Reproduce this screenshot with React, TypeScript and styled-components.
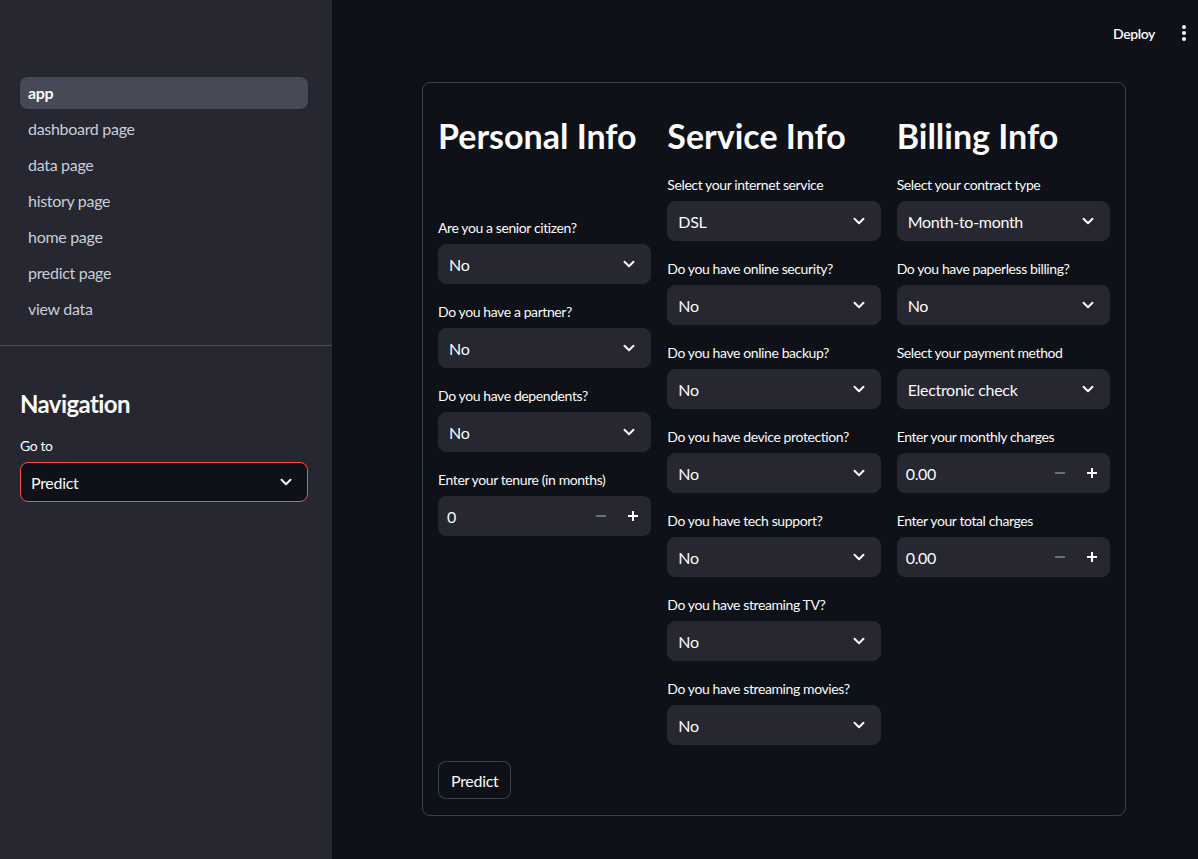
import React from "react";
import styled, { createGlobalStyle } from "styled-components";

const FONT = `"Lato", "Noto Sans", sans-serif`;

const GlobalStyle = createGlobalStyle`
  html, body { margin: 0; padding: 0; background: #0e1117; }
  body { font-family: ${FONT}; color: #fafafa; letter-spacing: -0.3px; }
  * { box-sizing: border-box; }
`;

const Layout = styled.div`
  display: flex;
  width: 1198px;
  height: 859px;
  overflow: hidden;
`;

const Sidebar = styled.aside`
  width: 332px;
  flex-shrink: 0;
  background: #262730;
  display: flex;
  flex-direction: column;
`;

const NavList = styled.nav`
  display: flex;
  flex-direction: column;
  gap: 4px;
  padding: 77px 24px 20px 20px;
`;

const NavItem = styled.div<{ $active?: boolean }>`
  height: 32px;
  display: flex;
  align-items: center;
  padding: 0 8px 2px;
  border-radius: 8px;
  font-size: 16px;
  background: ${(p) => (p.$active ? "#474a56" : "transparent")};
  color: ${(p) => (p.$active ? "#fafafa" : "#c9ced8")};
  font-weight: ${(p) => (p.$active ? 700 : 400)};
`;

const Divider = styled.hr`
  margin: 0;
  border: none;
  border-top: 1px solid #4a4b55;
`;

const SidebarSection = styled.div`
  display: flex;
  flex-direction: column;
  padding: 43px 24px 0 20px;
`;

const SideHeading = styled.h2`
  margin: 0 0 16px;
  font-size: 24px;
  line-height: 29px;
  font-weight: 700;
  letter-spacing: -0.6px;
  color: #fafafa;
`;

const Main = styled.main`
  flex: 1;
  display: flex;
  flex-direction: column;
`;

const TopBar = styled.header`
  height: 66px;
  display: flex;
  justify-content: flex-end;
  align-items: center;
  gap: 21px;
  padding-right: 6px;
`;

const DeployText = styled.span`
  font-size: 14px;
  font-weight: 600;
  letter-spacing: -0.4px;
  color: #fafafa;
`;

const Content = styled.div`
  padding: 16px 0 0 90px;
`;

const Card = styled.section`
  width: 704px;
  border: 1px solid rgba(250, 250, 250, 0.2);
  border-radius: 8px;
  padding: 16px 15px;
  display: flex;
  flex-direction: column;
  gap: 16px;
`;

const Columns = styled.div`
  display: grid;
  grid-template-columns: repeat(3, 1fr);
  gap: 16px;
  align-items: start;
`;

const Column = styled.div`
  display: flex;
  flex-direction: column;
  gap: 16px;
  min-width: 0;
`;

const Heading = styled.h2`
  margin: 0;
  padding-top: 16px;
  font-size: 34px;
  line-height: 42px;
  font-weight: 700;
  letter-spacing: 0;
  color: #fafafa;
  white-space: nowrap;
`;

const Spacer = styled.div<{ $h: number }>`
  height: ${(p) => p.$h}px;
`;

const FieldWrap = styled.div`
  display: flex;
  flex-direction: column;
`;

const Label = styled.label`
  height: 24px;
  line-height: 24px;
  margin-bottom: 4px;
  font-size: 14px;
  letter-spacing: -0.4px;
  color: #fafafa;
  white-space: nowrap;
`;

const SelectBox = styled.div<{ $focused?: boolean }>`
  height: 40px;
  border-radius: 8px;
  display: flex;
  align-items: center;
  justify-content: space-between;
  padding: 0 11px 0 10px;
  font-size: 16px;
  color: #fafafa;
  background: ${(p) => (p.$focused ? "#0e1117" : "#262730")};
  border: 1px solid ${(p) => (p.$focused ? "#ff4b4b" : "#262730")};
`;

const NumberBox = styled.div`
  height: 40px;
  border-radius: 8px;
  background: #262730;
  display: flex;
  align-items: center;
  padding: 0 2px 0 9px;
  font-size: 16px;
  color: #fafafa;
`;

const NumberValue = styled.span`
  flex: 1;
`;

const StepButton = styled.div`
  width: 32px;
  height: 38px;
  display: flex;
  align-items: center;
  justify-content: center;
`;

const Button = styled.button`
  align-self: flex-start;
  height: 38px;
  padding: 0 12px;
  border-radius: 8px;
  border: 1px solid rgba(250, 250, 250, 0.2);
  background: #0e1117;
  color: #fafafa;
  font-family: ${FONT};
  font-size: 16px;
  letter-spacing: -0.3px;
`;

const Chevron = () => (
  <svg width="20" height="20" viewBox="0 0 20 20" fill="none">
    <path d="M5.5 7.75l4.5 4.5 4.5-4.5" stroke="#fafafa" strokeWidth="2" strokeLinecap="round" strokeLinejoin="round" />
  </svg>
);

const Minus = ({ color }: { color: string }) => (
  <svg width="12" height="12" viewBox="0 0 12 12">
    <rect x="1" y="5" width="10" height="2" fill={color} />
  </svg>
);

const Plus = () => (
  <svg width="12" height="12" viewBox="0 0 12 12">
    <rect x="1" y="5" width="10" height="2" fill="#fafafa" />
    <rect x="5" y="1" width="2" height="10" fill="#fafafa" />
  </svg>
);

const Kebab = () => (
  <svg width="16" height="20" viewBox="0 0 16 20">
    <circle cx="8" cy="4" r="2" fill="#fafafa" />
    <circle cx="8" cy="10" r="2" fill="#fafafa" />
    <circle cx="8" cy="16" r="2" fill="#fafafa" />
  </svg>
);

const Select = ({ label, value, focused }: { label: string; value: string; focused?: boolean }) => (
  <FieldWrap>
    <Label>{label}</Label>
    <SelectBox $focused={focused}>
      <span>{value}</span>
      <Chevron />
    </SelectBox>
  </FieldWrap>
);

const NumberInput = ({ label, value }: { label: string; value: string }) => (
  <FieldWrap>
    <Label>{label}</Label>
    <NumberBox>
      <NumberValue>{value}</NumberValue>
      <StepButton>
        <Minus color="#6c6e78" />
      </StepButton>
      <StepButton>
        <Plus />
      </StepButton>
    </NumberBox>
  </FieldWrap>
);

const pages = ["app", "dashboard page", "data page", "history page", "home page", "predict page", "view data"];

export default function App() {
  return (
    <>
      <GlobalStyle />
      <Layout>
        <Sidebar>
          <NavList>
            {pages.map((p, i) => (
              <NavItem key={p} $active={i === 0}>
                {p}
              </NavItem>
            ))}
          </NavList>
          <Divider />
          <SidebarSection>
            <SideHeading>Navigation</SideHeading>
            <Select label="Go to" value="Predict" focused />
          </SidebarSection>
        </Sidebar>
        <Main>
          <TopBar>
            <DeployText>Deploy</DeployText>
            <Kebab />
          </TopBar>
          <Content>
            <Card>
              <Columns>
                <Column>
                  <Heading>Personal Info</Heading>
                  <Spacer $h={27} />
                  <Select label="Are you a senior citizen?" value="No" />
                  <Select label="Do you have a partner?" value="No" />
                  <Select label="Do you have dependents?" value="No" />
                  <NumberInput label="Enter your tenure (in months)" value="0" />
                </Column>
                <Column>
                  <Heading>Service Info</Heading>
                  <Select label="Select your internet service" value="DSL" />
                  <Select label="Do you have online security?" value="No" />
                  <Select label="Do you have online backup?" value="No" />
                  <Select label="Do you have device protection?" value="No" />
                  <Select label="Do you have tech support?" value="No" />
                  <Select label="Do you have streaming TV?" value="No" />
                  <Select label="Do you have streaming movies?" value="No" />
                </Column>
                <Column>
                  <Heading>Billing Info</Heading>
                  <Select label="Select your contract type" value="Month-to-month" />
                  <Select label="Do you have paperless billing?" value="No" />
                  <Select label="Select your payment method" value="Electronic check" />
                  <NumberInput label="Enter your monthly charges" value="0.00" />
                  <NumberInput label="Enter your total charges" value="0.00" />
                </Column>
              </Columns>
              <Button>Predict</Button>
            </Card>
          </Content>
        </Main>
      </Layout>
    </>
  );
}
